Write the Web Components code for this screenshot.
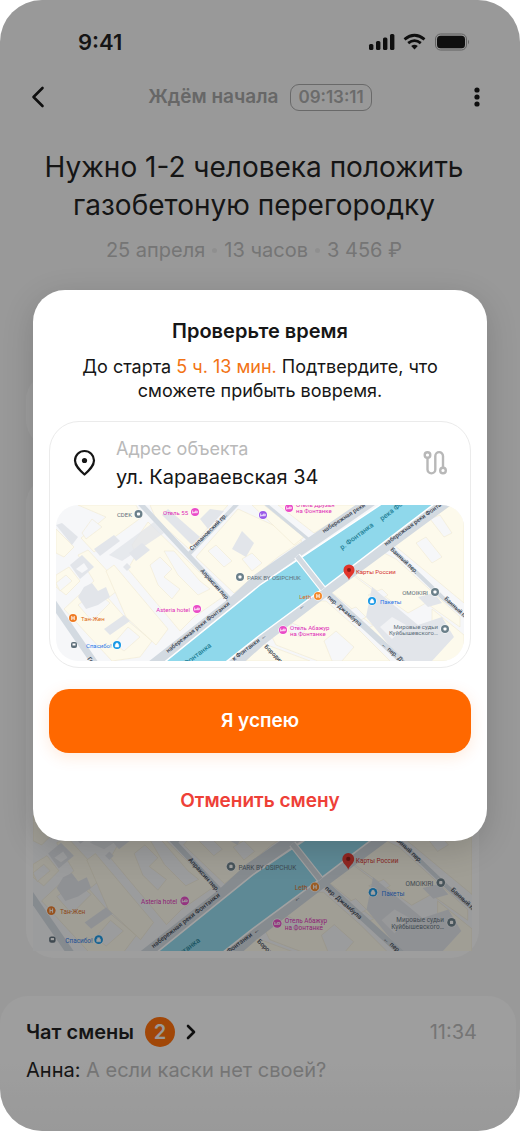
<!DOCTYPE html>
<html lang="ru">
<head>
<meta charset="utf-8">
<meta name="viewport" content="width=device-width, initial-scale=1">
<title>Смена</title>
<style>
  body {
    margin: 0;
    background: #ffffff;
    color: #161616;
    font-family: Inter, "Liberation Sans", sans-serif;
  }
</style>
</head>
<body>
<phone-screen>
  <status-bar time="9:41"></status-bar>
  <shift-header timer="09:13:11">Ждём начала</shift-header>
  <shift-summary>
    Нужно 1-2 человека положить газобетоную перегородку
    <span slot="facts">25 апреля</span>
    <span slot="facts">13 часов</span>
    <span slot="facts">3 456 ₽</span>
  </shift-summary>
  <shift-card></shift-card>
  <shift-card size="large"><city-map cropped></city-map></shift-card>
  <chat-preview count="2" time="11:34" author="Анна:">
    Чат смены
    <span slot="message">А если каски нет своей?</span>
  </chat-preview>
  <confirm-dialog slot="overlay">
    <span slot="title">Проверьте время</span>
    <span slot="text">До старта <time-left>5 ч. 13 мин.</time-left> Подтвердите, что сможете прибыть вовремя.</span>
    <address-card label="Адрес объекта" address="ул. Караваевская 34">
      <city-map></city-map>
    </address-card>
    <action-button slot="actions" kind="primary">Я успею</action-button>
    <action-button slot="actions" kind="danger">Отменить смену</action-button>
  </confirm-dialog>
</phone-screen>

<script>
/**
 * Shared base, puts the html getter of a class in its shadow root
 */
class ShiftElement extends HTMLElement {
  constructor() {
    super();
    this.template = document.createElement("template");
    this.attachShadow({ mode: "open" });
  }
  connectedCallback() {
    this.template.innerHTML = this.html;
    this.shadowRoot.innerHTML = "";
    this.shadowRoot.appendChild(this.template.content.cloneNode(true));
  }
}

/**
 * `phone-screen`
 * `rounded screen with a scrim and an overlay above its content`
 */
class PhoneScreen extends ShiftElement {
  static get tag() {
    return "phone-screen";
  }
  get html() {
    return `
    <style>
      :host {
        display: flex;
        position: relative;
        box-sizing: border-box;
        min-height: 100vh;
        border-radius: 42px;
        overflow: hidden;
        background: #f2f2f2;
      }
      main {
        display: flex;
        flex-direction: column;
        flex: 1;
        min-width: 0;
      }
      .scrim {
        position: absolute;
        inset: 0;
        display: flex;
        align-items: center;
        justify-content: center;
        padding: 0 33px;
        background: rgba(20, 20, 20, 0.4);
      }
    </style>
    <main><slot></slot></main>
    <div class="scrim"><slot name="overlay"></slot></div>`;
  }
}
window.customElements.define(PhoneScreen.tag, PhoneScreen);

/**
 * `status-bar`
 */
class StatusBar extends ShiftElement {
  static get tag() {
    return "status-bar";
  }
  get html() {
    return `
    <style>
      :host {
        display: flex;
        align-items: center;
        justify-content: space-between;
        padding: 28px 50px 0 78px;
      }
      span {
        font-size: 22px;
        line-height: 28px;
        font-weight: 600;
      }
      svg {
        display: block;
      }
    </style>
    <span>${this.getAttribute("time")}</span>
    <svg width="102" height="18" viewBox="0 0 102 18" fill="#0c0c0c" aria-hidden="true">
      <rect x="1" y="11" width="4.400" height="6" rx="1.500"/>
      <rect x="8" y="8" width="4.400" height="9" rx="1.500"/>
      <rect x="15" y="4.500" width="4.400" height="12.500" rx="1.500"/>
      <rect x="22" y="1" width="4.400" height="16" rx="1.500"/>
      <g fill="none" stroke="#0c0c0c" stroke-width="2.800">
        <path d="M36.500 6.300Q46.500 -1.800 56.500 6.300"/>
        <path d="M40.200 10.200Q46.500 5.100 52.800 10.200"/>
      </g>
      <path d="M43.200 13Q46.500 10.300 49.800 13L46.500 16.600Z"/>
      <rect x="67.500" y="1" width="31" height="16" rx="5" fill="none" stroke="#969696"/>
      <rect x="69" y="2.700" width="28" height="12.600" rx="3.500"/>
      <path d="M100 6.500Q102 9 100 11.500Z" fill="#969696"/>
    </svg>`;
  }
}
window.customElements.define(StatusBar.tag, StatusBar);

/**
 * `shift-header`
 * `back and menu buttons with the state of the shift between them`
 */
class ShiftHeader extends ShiftElement {
  static get tag() {
    return "shift-header";
  }
  get html() {
    return `
    <style>
      :host {
        display: flex;
        align-items: center;
        justify-content: space-between;
        padding: 20px 22px 0;
      }
      button {
        display: flex;
        align-items: center;
        justify-content: center;
        width: 32px;
        height: 42px;
        padding: 0;
        border: 0;
        background: none;
      }
      .menu {
        justify-content: flex-start;
        padding-left: 8px;
      }
      .state {
        display: flex;
        align-items: center;
        gap: 12px;
        color: #9e9e9e;
        font-size: 19px;
        line-height: 28px;
        font-weight: 600;
      }
      time {
        border: 1px solid #a2a2a2;
        border-radius: 9px;
        padding: 0 7px;
        color: #a6a6a6;
        font-size: 17px;
        line-height: 25px;
      }
    </style>
    <button type="button" aria-label="Назад">
      <svg width="14" height="22" viewBox="0 0 14 22" fill="none" stroke="#0c0c0c" stroke-width="2.600" stroke-linecap="round" stroke-linejoin="round"><path d="M11.500 2L2.500 11L11.500 20"/></svg>
    </button>
    <div class="state"><slot></slot><time>${this.getAttribute("timer")}</time></div>
    <button type="button" class="menu" aria-label="Меню">
      <svg width="6" height="22" viewBox="0 0 6 22" fill="#0c0c0c"><circle cx="3" cy="4" r="2.600"/><circle cx="3" cy="11" r="2.600"/><circle cx="3" cy="18" r="2.600"/></svg>
    </button>`;
  }
}
window.customElements.define(ShiftHeader.tag, ShiftHeader);

/**
 * `shift-summary`
 * `name of the job and a line of facts`
 */
class ShiftSummary extends ShiftElement {
  static get tag() {
    return "shift-summary";
  }
  get html() {
    return `
    <style>
      :host {
        display: block;
        padding: 30px 36px 0 24px;
        text-align: center;
      }
      h1 {
        margin: 0;
        font-size: 28px;
        line-height: 38px;
        font-weight: 400;
      }
      p {
        display: flex;
        justify-content: center;
        gap: 7px;
        margin: 12px 0 0;
        color: #b6b6b6;
        font-size: 20px;
        line-height: 28px;
        font-weight: 400;
      }
      ::slotted(span) {
        display: flex;
        align-items: center;
        gap: 7px;
        white-space: nowrap;
      }
      ::slotted(span:not(:first-of-type))::before {
        content: "";
        width: 5px;
        height: 5px;
        border-radius: 50%;
        background: #e2e2e2;
      }
    </style>
    <h1><slot></slot></h1>
    <p><slot name="facts"></slot></p>`;
  }
}
window.customElements.define(ShiftSummary.tag, ShiftSummary);

/**
 * `shift-card`
 */
class ShiftCard extends ShiftElement {
  static get tag() {
    return "shift-card";
  }
  get html() {
    return `
    <style>
      :host {
        display: flex;
        flex-direction: column;
        justify-content: flex-end;
        box-sizing: border-box;
        min-height: 76px;
        margin: 108px 41px 0 26px;
        padding: 7px;
        border-radius: 28px;
        background: #fafafa;
      }
      :host([size="large"]) {
        min-height: 482px;
        margin-top: 28px;
      }
    </style>
    <slot></slot>`;
  }
}
window.customElements.define(ShiftCard.tag, ShiftCard);

/**
 * `chat-preview`
 */
class ChatPreview extends ShiftElement {
  static get tag() {
    return "chat-preview";
  }
  get html() {
    return `
    <style>
      :host {
        display: block;
        flex: 1;
        margin: 38px 4px 0 0;
        padding: 20px 39px 32px 26px;
        border-radius: 28px 28px 0 0;
        background: linear-gradient(#fafafa 50%, #f2f2f2);
        font-size: 20px;
        line-height: 32px;
        font-weight: 400;
      }
      header {
        display: flex;
        align-items: center;
        justify-content: space-between;
      }
      a {
        display: flex;
        align-items: center;
        gap: 11px;
        color: inherit;
        font-weight: 600;
        text-decoration: none;
      }
      b {
        width: 30px;
        border-radius: 50%;
        background: #ff6a00;
        color: #f2f2f2;
        font-size: 20px;
        line-height: 30px;
        font-weight: 600;
        text-align: center;
      }
      time,
      ::slotted([slot="message"]) {
        color: #b6b6b6;
      }
      p {
        margin: 6px 0 0;
      }
    </style>
    <header>
      <a href="#chat"><span><slot></slot></span><b>${this.getAttribute("count")}</b>
        <svg width="10" height="16" viewBox="0 0 10 16" fill="none" stroke="#0c0c0c" stroke-width="2.600" stroke-linecap="round" stroke-linejoin="round"><path d="M2 2L8 8L2 14"/></svg>
      </a>
      <time>${this.getAttribute("time")}</time>
    </header>
    <p>${this.getAttribute("author")} <slot name="message"></slot></p>`;
  }
}
window.customElements.define(ChatPreview.tag, ChatPreview);

/**
 * `time-left`
 */
class TimeLeft extends ShiftElement {
  static get tag() {
    return "time-left";
  }
  get html() {
    return `
    <style>
      :host {
        display: inline;
        color: #f27314;
      }
    </style>
    <slot></slot>`;
  }
}
window.customElements.define(TimeLeft.tag, TimeLeft);

/**
 * `confirm-dialog`
 * `title, text, content and a column of actions`
 */
class ConfirmDialog extends ShiftElement {
  static get tag() {
    return "confirm-dialog";
  }
  get html() {
    return `
    <style>
      :host {
        display: block;
        flex: 1;
        min-width: 0;
      }
      section {
        padding: 27px 16px 12px;
        border-radius: 32px;
        background: #ffffff;
        box-shadow: 0 8px 32px rgba(0, 0, 0, 0.16);
      }
      h2 {
        margin: 0;
        font-size: 20px;
        line-height: 28px;
        font-weight: 600;
        text-align: center;
      }
      p {
        margin: 10px 24px 18px;
        font-size: 18px;
        line-height: 24px;
        font-weight: 400;
        text-align: center;
      }
      footer {
        display: flex;
        flex-direction: column;
        gap: 20px;
        margin-top: 21px;
      }
    </style>
    <section role="dialog" aria-labelledby="title">
      <h2 id="title"><slot name="title"></slot></h2>
      <p><slot name="text"></slot></p>
      <slot></slot>
      <footer><slot name="actions"></slot></footer>
    </section>`;
  }
}
window.customElements.define(ConfirmDialog.tag, ConfirmDialog);

/**
 * `address-card`
 */
class AddressCard extends ShiftElement {
  static get tag() {
    return "address-card";
  }
  get html() {
    return `
    <style>
      :host {
        display: block;
        padding: 13px 6px 6px;
        border: 1px solid #ebebeb;
        border-radius: 30px;
      }
      .row {
        display: flex;
        align-items: center;
        gap: 18px;
        padding: 0 15px 14px 16px;
      }
      dl {
        flex: 1;
        margin: 0;
        font-size: 20px;
        line-height: 28px;
        font-weight: 400;
      }
      dt {
        color: #b9b9b9;
        font-size: 18px;
      }
      dd {
        margin: 0;
      }
      svg {
        display: block;
      }
      button {
        padding: 0;
        border: 0;
        background: none;
      }
    </style>
    <div class="row">
      <svg width="26" height="28" viewBox="0 0 26 28" fill="none" stroke="#161616" stroke-width="2.200" aria-hidden="true">
        <path d="M12.500 25.500C8 21.500 3 17 3 11.500A9.500 9.500 0 0 1 22 11.500C22 17 17 21.500 12.500 25.500Z" stroke-linejoin="round"/>
        <circle cx="12.500" cy="11.500" r="2.600" fill="#161616" stroke="none"/>
      </svg>
      <dl>
        <dt>${this.getAttribute("label")}</dt>
        <dd>${this.getAttribute("address")}</dd>
      </dl>
      <button type="button" aria-label="Маршрут">
        <svg width="26" height="26" viewBox="0 0 26 26" fill="none" stroke="#b8b8b8" stroke-width="2.400">
          <circle cx="4.500" cy="5" r="2.800"/>
          <circle cx="20" cy="20.500" r="2.800"/>
          <path d="M4.500 7.800V19.500A3.900 3.900 0 0 0 12.300 19.500V6A3.800 3.800 0 0 1 20 6V17.700"/>
        </svg>
      </button>
    </div>
    <slot></slot>`;
  }
}
window.customElements.define(AddressCard.tag, AddressCard);

/**
 * `action-button`
 */
class ActionButton extends ShiftElement {
  static get tag() {
    return "action-button";
  }
  get html() {
    return `
    <style>
      :host {
        display: block;
      }
      button {
        display: block;
        width: 100%;
        height: 64px;
        padding: 0;
        border: 0;
        border-radius: 20px;
        background: #ff6800;
        box-shadow: 0 4px 16px rgba(255, 104, 0, 0.14);
        color: #ffffff;
        font: 600 19px/28px Inter, "Liberation Sans", sans-serif;
      }
      :host([kind="danger"]) button {
        height: 56px;
        background: none;
        box-shadow: none;
        color: #ee4037;
      }
    </style>
    <button type="button"><slot></slot></button>`;
  }
}
window.customElements.define(ActionButton.tag, ActionButton);

/**
 * `city-map`
 * `streets, river and places around the address`
 */
class CityMap extends ShiftElement {
  static get tag() {
    return "city-map";
  }
  place(x, y, color, glyph) {
    return `<g transform="translate(${x} ${y})"><circle r="4.600" fill="#ffffff"/><circle r="4" fill="${color}"/>${glyph}</g>`;
  }
  get html() {
    const bed = `<path d="M-2.300 -1.500V1.500M-2.300 .7H2.300V-.8H0V.7" fill="none" stroke="#ffffff" stroke-width=".8"/>`;
    const dot = `<rect x="-1.500" y="-1.500" width="3" height="3" rx=".8" fill="#ffffff"/>`;
    const food = `<path d="M-1.200 -2V2M1.200 -2V2M-1.200 0H1.200" stroke="#ffffff" stroke-width=".9"/>`;
    const bag = `<path d="M-1.800 -.4H1.800V2H-1.800ZM-1 -.4V-1.800H1V-.4" fill="#ffffff" stroke="#ffffff" stroke-width=".5"/>`;
    // the cropped map hides the lowest strip
    const height = this.hasAttribute("cropped") ? 151 : 156;
    return `
    <style>
      :host {
        display: block;
        border-radius: 22px;
        overflow: hidden;
      }
      :host([cropped]) {
        border-radius: 0;
      }
      svg {
        display: block;
        width: 100%;
        height: auto;
      }
      text {
        font: 400 6px Roboto, "Liberation Sans", sans-serif;
      }
      .street text {
        fill: #3c4652;
        font-weight: 500;
      }
      .river text {
        font-size: 7px;
        font-weight: 500;
      }
      .gray {
        fill: #5e6f7a;
      }
      .pink {
        fill: #e02cb8;
      }
      .end {
        text-anchor: end;
      }
    </style>
    <svg viewBox="0 0 408 ${height}" role="img" aria-label="Карта">
      <rect width="408" height="156" fill="#f6f7f9"/>
      <g fill="#fdfaec" stroke="#efe6cd" stroke-width=".5">
        <path d="M22 0H80L86 12L38 47L25 33L50 12Z"/>
        <path d="M0 24L18 42L8 52L0 48Z"/>
        <path d="M0 70L13 62L24 76L10 90L0 82Z"/>
        <path d="M22 50L32 45L66 82L52 93L72 116L96 136L84 152L56 156L8 104L38 76Z"/>
        <path d="M92 17L168 91L138 112L124 126L72 64L80 50L76 40Z"/>
        <path d="M50 66L58 60L112 124L100 140L70 112Z"/>
        <path d="M94 0H172L133 44L100 14Z"/>
        <path d="M182 4L230 26L246 36L222 52L178 88L140 52Z"/>
        <path d="M196 0H208L248 32L238 40Z"/>
        <path d="M222 0H304L258 28Z"/>
        <path d="M395 0H408V98L338 40Z"/>
        <path d="M328 48L340 54L404 112V122L370 98L352 108L296 68Z"/>
        <path d="M278 78L294 68L334 98L316 120L274 86Z"/>
        <path d="M258 96L270 96L304 126L334 156H262L220 140L214 128Z"/>
        <path d="M206 138L254 156H190Z"/>
        <path d="M376 104L408 130V156H368L376 140Z"/>
        <path d="M310 124L322 118L350 146L346 152Z"/>
      </g>
      <g fill="#f6f7f9" stroke="#efe6cd" stroke-width=".5">
        <path d="M0 78L10 70L16 76L4 86Z"/>
        <path d="M36 14L46 22L30 34L26 28Z"/>
        <path d="M40 86L54 98L36 116L22 100Z"/>
        <path d="M72 122L84 132L68 146L58 138Z"/>
        <path d="M94 60L104 52L116 64L108 72L124 84L116 94L102 80Z"/>
        <path d="M108 46L118 46L144 76L154 84L142 90L128 76L122 70Z"/>
        <path d="M152 46L160 40L176 56L168 62Z"/>
        <path d="M186 54L196 48L206 58L196 66Z"/>
        <path d="M360 38L370 32L386 52L376 58Z"/>
        <path d="M374 14L384 10L396 28L388 32Z"/>
        <path d="M312 90L326 84L332 90L322 96Z"/>
        <path d="M290 106L300 102L310 112L300 118Z"/>
        <path d="M268 136L280 126L298 142L286 156H276Z"/>
        <path d="M236 118L250 124L244 132L232 126Z"/>
      </g>
      <g fill="#e2e5ea">
        <path d="M0 20L6 18L22 32L16 40Z"/>
        <path d="M38 44L58 30L64 36L44 51Z"/>
        <path d="M53 50L98 17L108 28L66 56Z" opacity=".8"/>
        <path d="M73 48L86 38L94 45L80 56Z"/>
        <path d="M106 10L112 4L144 32L136 40Z"/>
        <path d="M176 44L186 26L198 38L190 52Z"/>
        <path d="M14 60L26 50L38 62L24 74Z"/>
        <path d="M28 82L36 78L42 86L50 82L54 92L42 100L30 104L22 92Z"/>
        <path d="M48 124L68 110L74 116L54 130Z"/>
        <path d="M67 62L71 58L75 62L71 66Z"/>
        <path d="M144 14L154 4L168 6L152 24Z"/>
        <path d="M316 82L362 120L386 112L398 132L376 156H346L310 112Z"/>
        <path d="M362 92L378 88L386 98L372 102Z"/>
      </g>
      <path d="M20 64L28 58L32 64L26 68Z" fill="#f6f7f9"/>
      <path d="M336 112L350 120L336 134L324 122Z" fill="#f1f2f4"/>
      <g fill="none" stroke="#d3dae1">
        <path d="M-4 96L40 160" stroke-width="7"/>
        <path d="M80 -6L132 50L176 97" stroke-width="5"/>
        <path d="M132 50L184 -4" stroke-width="4"/>
        <path d="M206 -4L252 34" stroke-width="3"/>
        <path d="M92 164L176 98L202 74L318 -6" stroke-width="11"/>
        <path d="M170 166L204 136L264 90L394 -6" stroke-width="11"/>
        <path d="M266 83L309 122L346 156" stroke-width="6"/>
        <path d="M334 42L386 92L412 114" stroke-width="4"/>
      </g>
      <path d="M105 160L204 80L330 -4H382L261 88L204 130L166 160Z" fill="#8fd8eb" stroke="#ffffff" stroke-width="1.500"/>
      <path d="M241 51L267 84" stroke="#ffffff" stroke-width="7"/>
      <path d="M241 51L267 84" stroke="#d3dae1" stroke-width="5"/>

      <g class="street">
        <text transform="translate(112 148) rotate(-38)">набережная реки Фонтанки</text>
        <text transform="translate(178 156) rotate(-37)">к Фонтанки</text>
        <text transform="translate(268 28) rotate(-33)">набережная реки</text>
        <text transform="translate(330 41) rotate(-36)">набережная реки Фонтанки</text>
        <text transform="translate(136 46) rotate(-45)">Степановский пр.</text>
        <text transform="translate(144 66) rotate(48)">Апраксин пер.</text>
        <text transform="translate(271 93) rotate(41)">пер. Джамбула</text>
        <text transform="translate(331 145) rotate(41)">пер. Джамбула</text>
        <text transform="translate(334 45) rotate(43)">Банный пер.</text>
        <text transform="translate(388 94) rotate(43)">Банный пер.</text>
        <text transform="translate(208 142) rotate(45)">Бородинская ул.</text>
        <text transform="translate(31 154) rotate(52)">Гороховая</text>
        <text transform="translate(244 105) rotate(-35)">←</text>
        <text transform="translate(206 135) rotate(-35)">←</text>
        <text transform="translate(325 140) rotate(40)">←</text>
      </g>
      <g class="river" fill="#1f8197">
        <text transform="translate(286 45) rotate(-37)">р. Фонтанка</text>
        <text transform="translate(326 16) rotate(-37)">река Фонтанка</text>
        <text transform="translate(130 161) rotate(-37)">Фонтанка</text>
      </g>

      ${this.place(82.500, 9, "#6a7f89", dot)}
      <text class="gray end" x="76" y="12">CDEK</text>
      ${this.place(139, 7, "#ea4bc7", bed)}
      <text class="pink end" x="132" y="10">Отель 55</text>
      ${this.place(207, 10, "#9a59e8", bed)}
      ${this.place(233, 3, "#ea4bc7", bed)}
      <text class="pink" x="240" y="2">Отель Друзья</text>
      <text class="pink" x="240" y="8">на Фонтанке</text>
      ${this.place(184, 72, "#6a7f89", dot)}
      <text class="gray" x="191" y="75">PARK BY OSIPCHUK</text>
      ${this.place(141, 104, "#ea4bc7", bed)}
      <text class="pink end" x="134" y="107">Asteria hotel</text>
      ${this.place(17, 113, "#ef7c24", food)}
      <text x="25" y="116" fill="#dc6b18">Тан-Жен</text>
      <rect x="15" y="137" width="6" height="6" rx="2" fill="#5e6f7a"/>
      <rect x="16.500" y="138.500" width="3" height="2" fill="#ffffff"/>
      <text x="30" y="143" fill="#2877e8">Спасибо!</text>
      ${this.place(61, 140, "#1597e5", bag)}
      ${this.place(262, 91, "#f48a2c", food)}
      <text class="end" x="255" y="94" fill="#dc6b18">Leth</text>
      ${this.place(316, 96, "#1597e5", bag)}
      <text x="324" y="99" fill="#2877e8">Пакеты</text>
      ${this.place(227, 125, "#ea4bc7", bed)}
      <text class="pink" x="234" y="125">Отель Абажур</text>
      <text class="pink" x="234" y="131">на Фонтанке</text>
      ${this.place(379, 87, "#6a7f89", dot)}
      <text class="gray end" x="372" y="90">OMOIKIRI</text>
      ${this.place(389, 124, "#6a7f89", dot)}
      <text class="gray end" x="382" y="124">Мировые судьи</text>
      <text class="gray end" x="382" y="130">Куйбышевского…</text>
      <path d="M293 75C292 71 287.500 69.500 287.500 65A5.500 5.500 0 0 1 298.500 65C298.500 69.500 294 71 293 75Z" fill="#e1352c"/>
      <circle cx="293" cy="65" r="2" fill="#8f1712"/>
      <text x="300" y="69" fill="#d42f2b">Карты России</text>
    </svg>`;
  }
}
window.customElements.define(CityMap.tag, CityMap);
</script>
</body>
</html>
